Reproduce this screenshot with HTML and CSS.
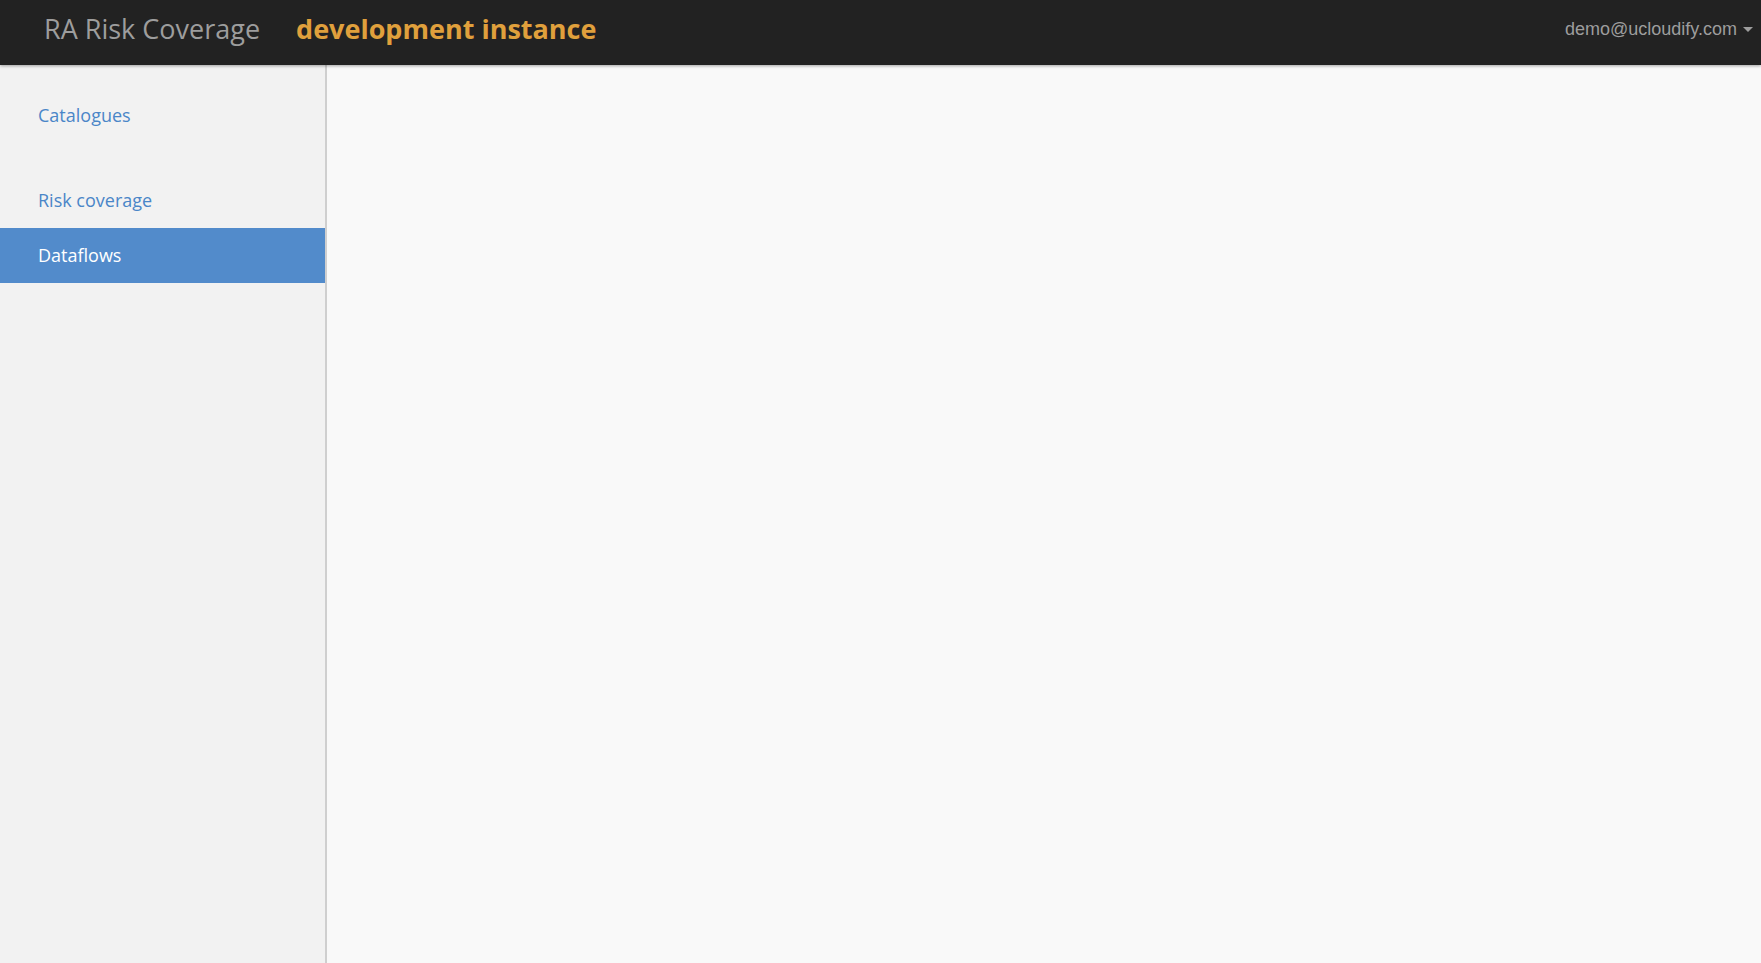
FILE: index.html
```html
<!DOCTYPE html>
<html lang="en">
<head>
    <meta charset="UTF-8">
    <title>RA Risk Coverage</title>
    <link rel="stylesheet" href="styles.css">
</head>
<body>
    <!-- 상단 네비게이션 -->
    <header class="topbar">
        <div class="brand">
            <span class="brand-name">RA Risk Coverage</span>
            <span class="brand-env">development instance</span>
        </div>
        <div class="user">
            demo@ucloudify.com
            <span class="caret"></span>
        </div>
    </header>

    <div class="wrap">
        <!-- 사이드 메뉴 -->
        <nav class="sidebar">
            <ul class="menu">
                <li><a href="#">Catalogues</a></li>
            </ul>
            <ul class="menu">
                <li><a href="#">Risk coverage</a></li>
                <li class="on"><a href="#">Dataflows</a></li>
            </ul>
        </nav>

        <!-- 본문 -->
        <main class="content"></main>
    </div>
</body>
</html>
```
FILE: styles.css
```css
html, body{
    margin: 0;
    height: 100%;
}

body{
    font-family: "Open Sans", "Liberation Sans", sans-serif;
    background-color: #f9f9f9;
    display: flex;
    flex-direction: column;
    overflow: hidden;
}

/* 상단바 */
.topbar{
    height: 65px;
    flex-shrink: 0;
    background-color: #222;
    display: flex;
    align-items: center;
    justify-content: space-between;
    box-shadow: 0 1px 3px rgba(0,0,0,.35);
    position: relative;
    z-index: 2;
}

.brand{
    display: flex;
    align-items: baseline;
    padding-left: 44px;
    padding-bottom: 9px;
}

.brand-name{
    font-size: 27px;
    color: #9d9d9d;
}

.brand-env{
    margin-left: 36px;
    font-size: 27px;
    font-weight: bold;
    color: #e0a03c;
}

.user{
    font-family: "Liberation Sans", Arial, sans-serif;
    font-size: 18px;
    color: #9d9d9d;
    padding-right: 8px;
    padding-bottom: 6px;
    display: flex;
    align-items: center;
}

/* 드롭다운 화살표 */
.caret{
    display: inline-block;
    margin-left: 6px;
    border-top: 5px solid #9d9d9d;
    border-left: 5px solid transparent;
    border-right: 5px solid transparent;
}

.wrap{
    flex: 1;
    display: flex;
    min-height: 0;
}

/* 사이드바 */
.sidebar{
    width: 325px;
    flex-shrink: 0;
    background-color: #f2f2f2;
    border-right: 2px solid #cfcfcf;
    box-shadow: 4px 0 6px rgba(0,0,0,.07);
    padding-top: 23px;
}

.menu{
    list-style: none;
    margin: 0 0 30px;
    padding: 0;
}

.menu li a{
    display: block;
    height: 55px;
    line-height: 55px;
    padding-left: 38px;
    font-size: 18px;
    color: #4a86c8;
    text-decoration: none;
}

/* 현재 메뉴 */
.menu li.on a{
    background-color: #528bcb;
    color: #fff;
}

.content{
    flex: 1;
    background-color: #f9f9f9;
}
```
